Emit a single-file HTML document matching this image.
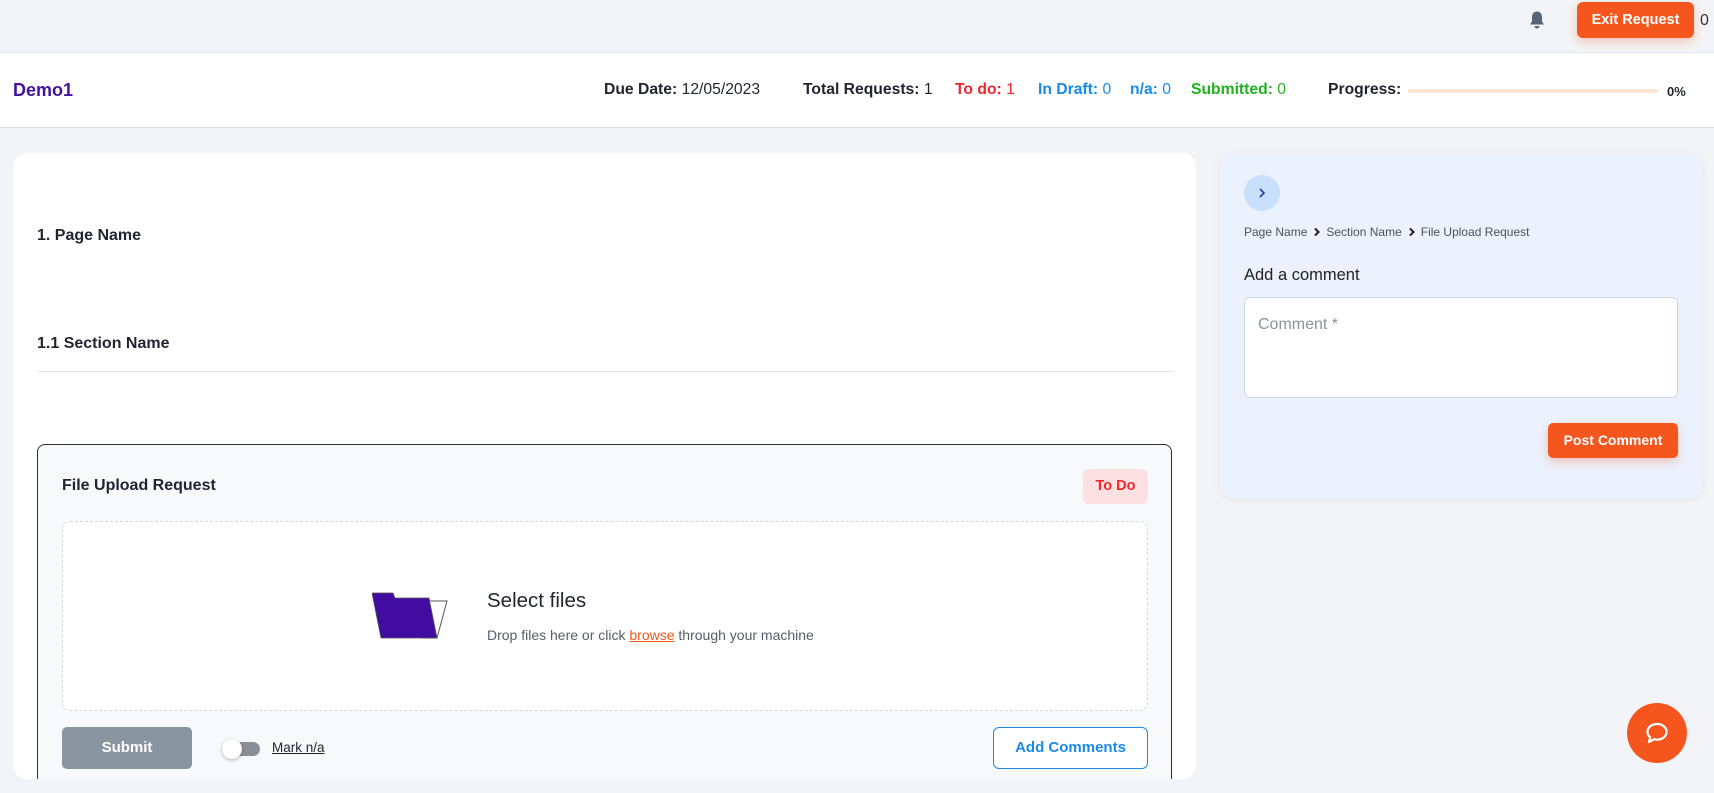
<!DOCTYPE html>
<html><head><meta charset="utf-8">
<style>
*{box-sizing:border-box;margin:0;padding:0}
body{width:1714px;height:793px;overflow:hidden;background:#f3f4f7;font-family:"Liberation Sans",sans-serif;color:#1f2430;position:relative}
.a{position:absolute;white-space:nowrap}
b{font-weight:700}
</style></head><body>
<div class="a" style="left:0;top:0;width:1714px;height:52px;background:#f3f4f7"></div>
<svg class="a" style="left:1528px;top:10px" width="18" height="20" viewBox="0 0 18 20"><path d="M9 1.5c-3.2 0-5 2.4-5 5.5v4.5L2 14.5h14l-2-3V7C14 3.9 12.2 1.5 9 1.5z" fill="#566574"/><path d="M6.5 16a2.5 2.5 0 005 0z" fill="#566574"/></svg>
<div class="a" style="left:1577px;top:2px;width:117px;height:36px;background:#f5561e;border-radius:6px;box-shadow:0 4px 10px rgba(245,86,30,.3);color:#fff;font-weight:700;font-size:14.5px;line-height:36px;text-align:center">Exit Request</div>
<div class="a" style="left:1700px;top:12px;font-size:16px;color:#333">0</div>

<div class="a" style="left:0;top:52px;width:1714px;height:76px;background:#fff;border-top:1px solid #e2e5ea;border-bottom:1px solid #dde1e7"></div>
<div class="a" style="left:13px;top:80px;font-size:18px;font-weight:700;color:#4411a0">Demo1</div>
<div class="a" style="left:604px;top:81px;font-size:15.7px"><b>Due Date:</b> 12/05/2023</div>
<div class="a" style="left:803px;top:81px;font-size:15.7px"><b>Total Requests:</b> 1</div>
<div class="a" style="left:955px;top:81px;font-size:15.7px;color:#f0262b"><b>To do:</b> 1</div>
<div class="a" style="left:1038px;top:81px;font-size:15.7px;color:#1a8ae8"><b>In Draft:</b> 0</div>
<div class="a" style="left:1130px;top:81px;font-size:15.7px;color:#1a8ae8"><b>n/a:</b> 0</div>
<div class="a" style="left:1191px;top:81px;font-size:15.7px;color:#1fb21f"><b>Submitted:</b> 0</div>
<div class="a" style="left:1328px;top:81px;font-size:15.7px"><b>Progress:</b></div>
<div class="a" style="left:1408px;top:89px;width:250px;height:4px;border-radius:2px;background:#fde3d6"></div>
<div class="a" style="left:1667px;top:84px;font-size:13px;font-weight:700">0%</div>

<div class="a" style="left:13px;top:153px;width:1183px;height:626px;background:#fff;border-radius:14px;overflow:hidden">
  <div class="a" style="left:24px;top:74px;font-size:16px;font-weight:700">1. Page Name</div>
  <div class="a" style="left:24px;top:182px;font-size:16px;font-weight:700">1.1 Section Name</div>
  <div class="a" style="left:24px;top:218px;width:1135px;height:1px;background:#dfe2e6"></div>
  <div class="a" style="left:24px;top:291px;width:1135px;height:360px;border:1px solid #2b2f38;border-radius:8px;background:#f8f9fb">
    <div class="a" style="left:24px;top:32px;font-size:16px;font-weight:700">File Upload Request</div>
    <div class="a" style="left:1045px;top:24px;width:65px;height:35px;background:#fde0e2;border-radius:6px;color:#f0262b;font-weight:700;font-size:14.5px;line-height:35px;text-align:center">To Do</div>
    <div class="a" style="left:24px;top:76px;width:1086px;height:190px;border:1px dashed #d3d7dc;border-radius:8px;background:#fff">
      <svg class="a" style="left:309px;top:70px" width="80" height="50" viewBox="371 592 80 50"><polygon points="428,601 446,601 436,638 420,638" fill="#fff" stroke="#555" stroke-width="1"/><polygon points="371,593 392,593 394,598 428,598 436,638 380,638" fill="#420ca0" stroke="#555" stroke-width=".8"/></svg>
      <div class="a" style="left:424px;top:67px;font-size:20.5px;color:#1f2430">Select files</div>
      <div class="a" style="left:424px;top:105px;font-size:14px;color:#555d68">Drop files here or click <span style="color:#f5561e;text-decoration:underline">browse</span> through your machine</div>
    </div>
    <div class="a" style="left:24px;top:282px;width:130px;height:42px;background:#8894a0;border-radius:5px;color:#fff;font-weight:700;font-size:15px;line-height:42px;text-align:center">Submit</div>
    <div class="a" style="left:185px;top:297px;width:37px;height:14px;background:#8a8f96;border-radius:7px"></div>
    <div class="a" style="left:184px;top:294px;width:20px;height:20px;background:#fff;border-radius:50%;box-shadow:0 1px 3px rgba(0,0,0,.3)"></div>
    <div class="a" style="left:234px;top:295px;font-size:13.5px;text-decoration:underline">Mark n/a</div>
    <div class="a" style="left:955px;top:282px;width:155px;height:42px;border:1px solid #1a8ae8;border-radius:6px;background:#fff;color:#1a8ae8;font-weight:700;font-size:15px;line-height:40px;text-align:center">Add Comments</div>
  </div>
</div>

<div class="a" style="left:1220px;top:153px;width:482px;height:345px;background:#ebf2fd;border-radius:14px;box-shadow:0 2px 10px rgba(0,0,0,.06)">
  <div class="a" style="left:24px;top:22px;width:36px;height:36px;border-radius:50%;background:#c8e0fb"><svg class="a" style="left:14px;top:12px" width="8" height="12" viewBox="0 0 8 12"><path d="M2 2l4 4-4 4" fill="none" stroke="#1b3f9c" stroke-width="1.6"/></svg></div>
  <div class="a" style="left:24px;top:72px;font-size:12px;color:#4a525c">Page Name<svg width="8" height="10" viewBox="0 0 8 10" style="vertical-align:-1px;margin:0 5px 0 6px"><path d="M2 1.5l3.5 3.5L2 8.5" fill="none" stroke="#222" stroke-width="2"/></svg>Section Name<svg width="8" height="10" viewBox="0 0 8 10" style="vertical-align:-1px;margin:0 5px 0 6px"><path d="M2 1.5l3.5 3.5L2 8.5" fill="none" stroke="#222" stroke-width="2"/></svg>File Upload Request</div>
  <div class="a" style="left:24px;top:113px;font-size:16.5px;color:#222">Add a comment</div>
  <div class="a" style="left:24px;top:144px;width:434px;height:101px;background:#fff;border:1px solid #cfd5dc;border-radius:6px"><div class="a" style="left:13px;top:18px;font-size:16px;color:#8a939c">Comment *</div></div>
  <div class="a" style="left:328px;top:270px;width:130px;height:35px;background:#f5561e;border-radius:5px;box-shadow:0 4px 10px rgba(245,86,30,.3);color:#fff;font-weight:700;font-size:14px;line-height:35px;text-align:center">Post Comment</div>
</div>

<div class="a" style="left:1627px;top:703px;width:60px;height:60px;border-radius:50%;background:#f5561e"></div>
<svg class="a" style="left:1643px;top:719px" width="28" height="28" viewBox="0 0 28 28"><path d="M14 5c5.5 0 9.5 3.4 9.5 7.8S19.5 20.6 14 20.6c-1 0-2-.1-2.9-.4L6 23l1.2-4.6C5.5 17 4.5 15 4.5 12.8 4.5 8.4 8.5 5 14 5z" fill="none" stroke="#fff" stroke-width="2.2" stroke-linejoin="round"/></svg>
</body></html>
